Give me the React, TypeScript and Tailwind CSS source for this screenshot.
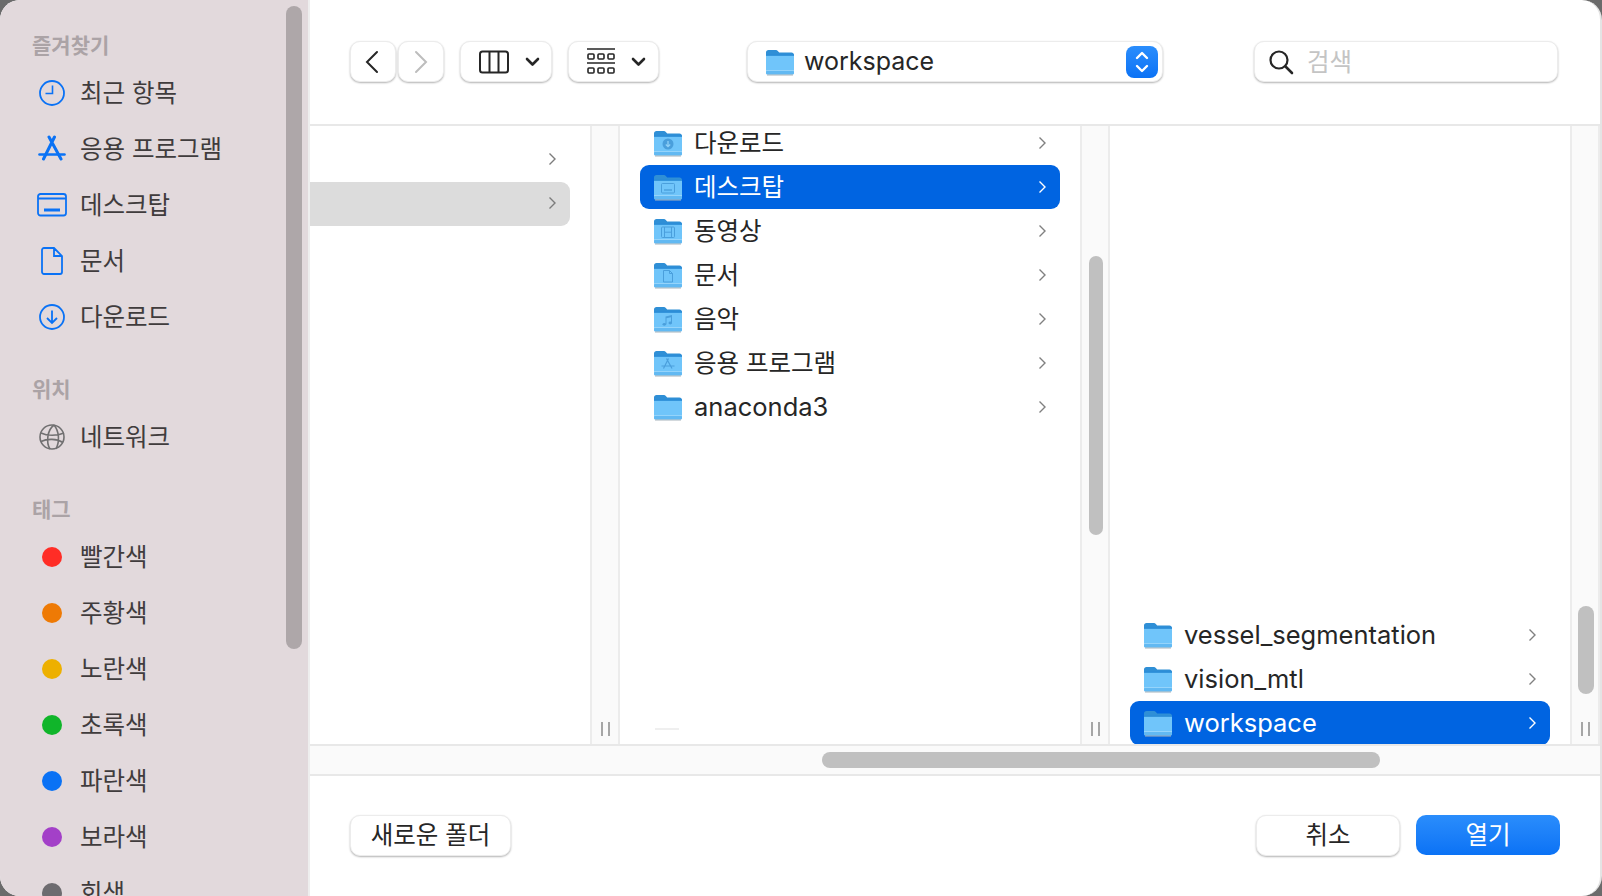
import React from "react";

const font = "[font-family:Inter,'Noto_Sans_CJK_KR',sans-serif]";

type Glyph = "down" | "desk" | "film" | "doc" | "music" | "app" | undefined;

function Folder({ glyph, className = "" }: { glyph?: Glyph; className?: string }) {
  const c = "#4a9fdc";
  return (
    <svg width="30" height="28" viewBox="0 0 30 28" className={"shrink-0 " + className}>
      <path d="M1 4.5C1 3 2 2 3.5 2h7c1 0 1.6.3 2.3 1l1.4 1.5h12.3c1.4 0 2.5 1 2.5 2.5v3H1z" fill="#2f8fd6" />
      <path d="M1 7.5h28v17c0 1.2-.8 2-2 2H3c-1.2 0-2-.8-2-2z" fill="#70c5fa" />
      <rect x="1" y="6.5" width="28" height="1.2" fill="#2a8cd8" />
      <rect x="1" y="22" width="28" height="1" fill="#95d4fb" />
      <rect x="1" y="23" width="28" height="3.5" rx="1.5" fill="#62b9f2" />
      <rect x="2" y="26.5" width="26" height="1" fill="#a8b4bc" />
      {glyph === "down" && (
        <g>
          <circle cx="15" cy="15" r="5.5" fill={c} />
          <path d="M15 12v5.5M12.8 15.5l2.2 2.2 2.2-2.2" stroke="#8fd0f7" strokeWidth="1.3" fill="none" />
        </g>
      )}
      {glyph === "desk" && (
        <g fill="none" stroke={c} strokeWidth="1">
          <rect x="8.5" y="10.5" width="13" height="9.5" rx="1" />
          <path d="M11 17h8" strokeWidth="1.4" />
        </g>
      )}
      {glyph === "film" && (
        <g fill="none" stroke={c} strokeWidth="1">
          <rect x="8.5" y="10" width="13" height="10.5" rx="1" />
          <path d="M11.5 10v10.5M18.5 10v10.5M11.5 15.2h7" />
        </g>
      )}
      {glyph === "doc" && (
        <path d="M10.5 9.5h6l3 3v8.5h-9zM16.5 9.5v3h3" fill="none" stroke={c} strokeWidth="1" />
      )}
      {glyph === "music" && (
        <g fill={c}>
          <path d="M12.5 11.5l6.5-1.5v8h-1v-5.8l-4.5 1V19h-1z" />
          <ellipse cx="11.3" cy="19.3" rx="1.8" ry="1.4" />
          <ellipse cx="17.3" cy="18" rx="1.8" ry="1.4" />
        </g>
      )}
      {glyph === "app" && (
        <path d="M15.5 9.5L10.5 19.5M13.5 9.5l5.5 10M8.5 17h13" fill="none" stroke={c} strokeWidth="1.2" />
      )}
    </svg>
  );
}

function Chev({ white = false, dim = false }: { white?: boolean; dim?: boolean }) {
  return (
    <svg width="9" height="14" viewBox="0 0 9 14" className="shrink-0">
      <path d="M1.5 1.5L7 7l-5.5 5.5" fill="none" stroke={white ? "#ffffff" : dim ? "#7c7c7c" : "#808080"} strokeWidth="1.4" />
    </svg>
  );
}

function Row({ name, glyph, selected, latin }: { name: string; glyph?: Glyph; selected?: boolean; latin?: boolean }) {
  return (
    <div className={"mx-[20px] flex h-[44px] shrink-0 items-center rounded-[9px] pl-[13px] pr-[13px] " + (selected ? "bg-[#0064e1] text-white" : "text-[#262626]")}>
      <Folder glyph={glyph} />
      <span className={"ml-[11px] flex-1 leading-[32px] " + (latin ? "text-[25.5px] " : "text-[24.5px] ") + font}>{name}</span>
      <Chev white={selected} />
    </div>
  );
}

function Grip() {
  return (
    <div className="absolute bottom-[8px] left-0 right-0 flex justify-center gap-[5px]">
      <div className="h-[14px] w-[2px] bg-[#a6a6a6]" />
      <div className="h-[14px] w-[2px] bg-[#a6a6a6]" />
    </div>
  );
}

function Strip({ w, thumb, children }: { w: string; thumb?: React.ReactNode; children?: React.ReactNode }) {
  return (
    <div className={"relative shrink-0 border-x-2 border-[#ececec] bg-[#fafafa] " + w}>
      {thumb}
      <Grip />
      {children}
    </div>
  );
}

function Side({ icon, label }: { icon: React.ReactNode; label: string }) {
  return (
    <div className="flex h-[56px] shrink-0 items-center pl-[35px]">
      <div className="flex w-[34px] shrink-0 justify-center">{icon}</div>
      <span className={"ml-[11px] text-[24.5px] leading-[32px] text-[#403c3d] " + font}>{label}</span>
    </div>
  );
}

function Head({ label, cls }: { label: string; cls: string }) {
  return <div className={"mb-[5px] pl-[32px] text-[21px] font-bold leading-[28px] text-[#aba3a6] " + font + " " + cls}>{label}</div>;
}

const Blue = "#0a72f5";
const sideIcons = {
  clock: (
    <svg width="28" height="28" viewBox="0 0 28 28" fill="none" stroke={Blue} strokeWidth="1.8">
      <circle cx="14" cy="14" r="12" />
      <path d="M14.5 6.5V14.5H7.5" strokeWidth="1.6" />
    </svg>
  ),
  app: (
    <svg width="30" height="28" viewBox="0 0 30 28" fill="none" stroke={Blue} strokeWidth="3" strokeLinecap="round">
      <path d="M17.5 2L6.5 24M12 2l12 22" />
      <path d="M2.5 19.5h25" strokeWidth="2.6" />
    </svg>
  ),
  desk: (
    <svg width="30" height="24" viewBox="0 0 30 24" fill="none" stroke={Blue} strokeWidth="1.8">
      <rect x="1" y="1" width="28" height="21.5" rx="2.5" />
      <path d="M1 5.5h28" />
      <path d="M7 17h16" strokeWidth="3" />
    </svg>
  ),
  doc: (
    <svg width="22" height="28" viewBox="0 0 22 28" fill="none" stroke={Blue} strokeWidth="1.8">
      <path d="M3 1h10l8 8v16a2 2 0 0 1-2 2H3a2 2 0 0 1-2-2V3a2 2 0 0 1 2-2zM13 1v8h8" />
    </svg>
  ),
  down: (
    <svg width="28" height="28" viewBox="0 0 28 28" fill="none" stroke={Blue} strokeWidth="1.8">
      <circle cx="14" cy="14" r="12" />
      <path d="M14 7.5V20M9 15l5 5 5-5" />
    </svg>
  ),
  globe: (
    <svg width="28" height="28" viewBox="0 0 28 28" fill="none" stroke="#717071" strokeWidth="1.6">
      <circle cx="14" cy="14" r="12" />
      <path d="M16 2C9 7 8 20 12 26M16 2c5 6 6 16 2 24M3 10c6 3 16 3 23 0M3 18.5c6-3 16-3 22 1" />
    </svg>
  ),
};

function Tag({ color, label }: { color: string; label: string }) {
  return <Side icon={<div className={"h-[20px] w-[20px] rounded-full " + color} />} label={label} />;
}

function Btn({ cls, children }: { cls: string; children?: React.ReactNode }) {
  return (
    <div className={"flex h-[41px] shrink-0 items-center rounded-[10px] border border-[#ececec] bg-white shadow-[0_1px_2px_rgba(0,0,0,0.3)] " + cls}>
      {children}
    </div>
  );
}

function DownMark() {
  return (
    <svg width="15" height="10" viewBox="0 0 15 10" fill="none" stroke="#262626" strokeWidth="2.6" strokeLinecap="round" strokeLinejoin="round">
      <path d="M2 2l5.5 5.5L13 2" />
    </svg>
  );
}

export default function App() {
  return (
    <div className="h-[896px] w-[1602px] overflow-hidden bg-[#6b6b6b]">
      <div className="flex h-full w-full overflow-hidden rounded-[20px] border-r-2 border-r-[#e4e4e4] bg-white">
        {/* sidebar */}
        <aside className="relative h-full w-[310px] shrink-0 overflow-hidden border-r-2 border-[#eeeeee] bg-[#e2d9dc]">
          <div className="absolute right-[6px] top-[6px] h-[643px] w-[16px] rounded-full bg-[#aea7a9]" />
          <Head label="즐겨찾기" cls="mt-[32px]" />
          <Side icon={sideIcons.clock} label="최근 항목" />
          <Side icon={sideIcons.app} label="응용 프로그램" />
          <Side icon={sideIcons.desk} label="데스크탑" />
          <Side icon={sideIcons.doc} label="문서" />
          <Side icon={sideIcons.down} label="다운로드" />
          <Head label="위치" cls="mt-[31px]" />
          <Side icon={sideIcons.globe} label="네트워크" />
          <Head label="태그" cls="mt-[31px]" />
          <Tag color="bg-[#ff2d26]" label="빨간색" />
          <Tag color="bg-[#ee7a05]" label="주황색" />
          <Tag color="bg-[#edb000]" label="노란색" />
          <Tag color="bg-[#10b52a]" label="초록색" />
          <Tag color="bg-[#0a72f5]" label="파란색" />
          <Tag color="bg-[#a340c8]" label="보라색" />
          <Tag color="bg-[#6e6c70]" label="회색" />
        </aside>

        {/* main */}
        <main className="flex h-full min-w-0 flex-1 flex-col">
          {/* toolbar */}
          <div className="flex h-[126px] shrink-0 items-start border-b-2 border-[#e8e8e8] pl-[40px] pt-[41px]">
            <Btn cls="w-[46px] justify-center">
              <svg width="16" height="24" viewBox="0 0 16 24" fill="none" stroke="#262626" strokeWidth="2" strokeLinecap="round" className="-ml-[3px]">
                <path d="M13 2L3 12l10 10" />
              </svg>
            </Btn>
            <Btn cls="ml-[2px] w-[46px] justify-center">
              <svg width="16" height="24" viewBox="0 0 16 24" fill="none" stroke="#bdbdbd" strokeWidth="2" strokeLinecap="round">
                <path d="M3 2l10 10L3 22" />
              </svg>
            </Btn>
            <Btn cls="ml-[16px] w-[92px] pl-[18px]">
              <svg width="30" height="24" viewBox="0 0 30 24" fill="none" stroke="#262626" strokeWidth="2">
                <rect x="1" y="1.5" width="28" height="21" rx="2.5" />
                <path d="M10.5 1.5v21M19.5 1.5v21" />
              </svg>
              <div className="ml-[16px]"><DownMark /></div>
            </Btn>
            <Btn cls="ml-[16px] w-[91px] pl-[18px]">
              <svg width="28" height="28" viewBox="0 0 28 28" fill="none" stroke="#262626" strokeWidth="1.6">
                <path d="M0 1h28M0 15h28" />
                <rect x="1" y="6" width="6" height="5" rx="1" />
                <rect x="11" y="6" width="6" height="5" rx="1" />
                <rect x="21" y="6" width="6" height="5" rx="1" />
                <rect x="1" y="20" width="6" height="5" rx="1" />
                <rect x="11" y="20" width="6" height="5" rx="1" />
                <rect x="21" y="20" width="6" height="5" rx="1" />
              </svg>
              <div className="ml-[16px]"><DownMark /></div>
            </Btn>
            <Btn cls="ml-[88px] w-[416px] pl-[17px] pr-[4px]">
              <Folder />
              <span className={"ml-[9px] -mt-[1px] flex-1 text-[25px] leading-[32px] text-[#262626] " + font}>workspace</span>
              <div className="flex h-[32px] w-[32px] items-center justify-center rounded-[8px] bg-gradient-to-b from-[#2a8dfc] to-[#0a72f5]">
                <svg width="16" height="26" viewBox="0 0 16 26" fill="none" stroke="white" strokeWidth="2.4" strokeLinecap="round" strokeLinejoin="round">
                  <path d="M3 9l5-5 5 5M3 17l5 5 5-5" />
                </svg>
              </div>
            </Btn>
            <Btn cls="ml-[91px] w-[304px] pl-[13px]">
              <svg width="26" height="26" viewBox="0 0 26 26" fill="none" stroke="#262626" strokeWidth="2.2" strokeLinecap="round">
                <circle cx="11" cy="11" r="8.5" />
                <path d="M17.5 17.5L24 24" strokeWidth="2.6" />
              </svg>
              <span className={"ml-[13px] mt-[1px] text-[24.5px] leading-[32px] text-[#c4c4c4] " + font}>검색</span>
            </Btn>
          </div>

          {/* columns */}
          <div className="flex min-h-0 flex-1">
            <section className="w-[280px] shrink-0 overflow-hidden pt-[12px]">
              <div className="-mt-[1px] mb-[1px] flex h-[44px] items-center justify-end pr-[33px]"><Chev dim /></div>
              <div className="flex h-[44px] w-[260px] items-center justify-end rounded-r-[9px] bg-[#dcdcdc] pb-[2px] pr-[13px]"><Chev dim /></div>
            </section>
            <Strip w="w-[30px]" />
            <section className="flex w-[460px] shrink-0 flex-col overflow-hidden">
              <div className="-mt-[5px]">
                <Row name="다운로드" glyph="down" />
                <Row name="데스크탑" glyph="desk" selected />
                <Row name="동영상" glyph="film" />
                <Row name="문서" glyph="doc" />
                <Row name="음악" glyph="music" />
                <Row name="응용 프로그램" glyph="app" />
                <Row name="anaconda3" latin />
              </div>
              <div className="ml-[35px] mb-[14px] mt-auto h-[2px] w-[24px] bg-[#efefef]" />
            </section>
            <Strip
              w="w-[30px]"
              thumb={<div className="absolute left-[7px] top-[130px] h-[279px] w-[14px] rounded-full bg-[#c0c0c0]" />}
            />
            <section className="flex w-[460px] shrink-0 flex-col justify-end overflow-hidden">
              <div className="-mb-[1px] flex flex-col">
                <Row name="vessel_segmentation" latin />
                <Row name="vision_mtl" latin />
                <Row name="workspace" selected latin />
              </div>
            </section>
            <Strip
              w="flex-1"
              thumb={<div className="absolute left-[6px] top-[480px] h-[88px] w-[16px] rounded-full bg-[#c0c0c0]" />}
            />
          </div>

          {/* horizontal scrollbar */}
          <div className="relative h-[32px] shrink-0 border-y-2 border-y-[#e8e8e8] bg-[#fafafa]">
            <div className="absolute left-[512px] top-[6px] h-[16px] w-[558px] rounded-full bg-[#c0c0c0]" />
          </div>

          {/* footer */}
          <div className="flex h-[120px] shrink-0 items-start pl-[40px] pr-[40px] pt-[39px]">
            <Btn cls={"w-[161px] justify-center text-[24.5px] text-[#262626] " + font}>새로운 폴더</Btn>
            <Btn cls={"ml-auto w-[144px] justify-center text-[24.5px] text-[#262626] " + font}>취소</Btn>
            <div className={"ml-[16px] flex h-[40px] w-[144px] items-center justify-center rounded-[10px] bg-gradient-to-b from-[#2a8dfc] to-[#0a72f5] text-[24.5px] text-white " + font}>열기</div>
          </div>
        </main>
      </div>
    </div>
  );
}
